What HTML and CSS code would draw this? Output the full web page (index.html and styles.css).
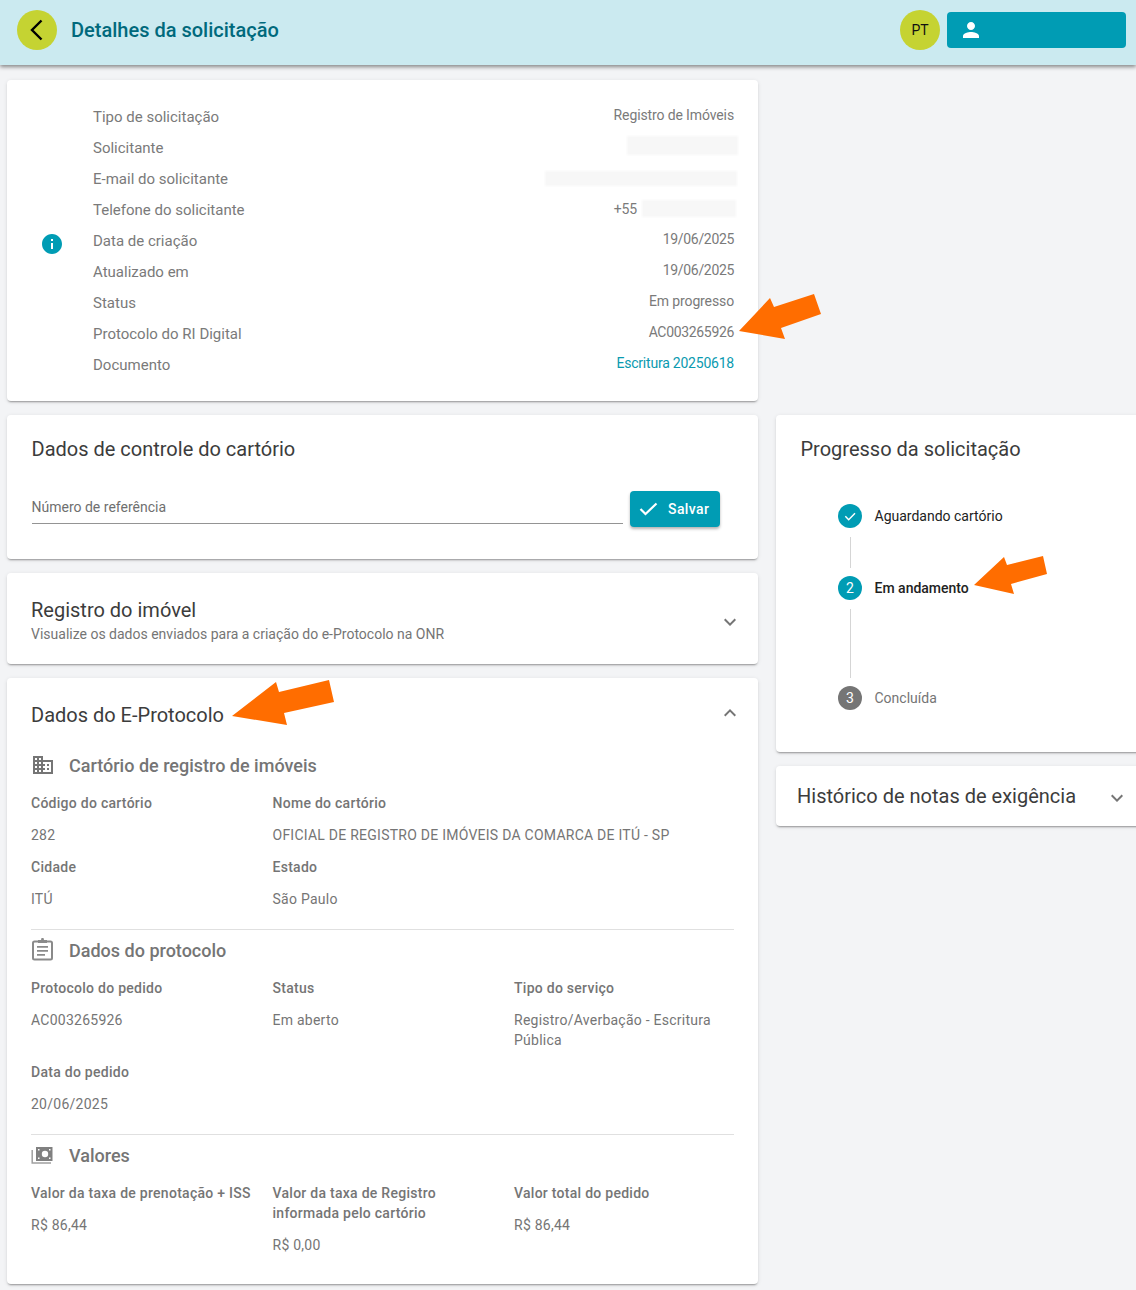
FILE: index.html
```html
<!DOCTYPE html>
<html lang="pt-BR">
<head>
<meta charset="utf-8">
<title>Detalhes da solicitação</title>
<link rel="stylesheet" href="styles.css">
</head>
<body>
<header class="topbar">
  <button class="back" aria-label="Voltar"><svg width="24" height="24" viewBox="0 0 24 24"><path d="M16.500 2.500 7 12l9.500 9.500" fill="none" stroke="#000" stroke-width="2.400"/></svg></button>
  <h1 class="page-title">Detalhes da solicitação</h1>
  <div class="avatar">PT</div>
  <div class="user-btn"><svg width="24" height="24" viewBox="0 0 24 24"><path fill="#fff" d="M12 12c2.200 0 4-1.800 4-4s-1.800-4-4-4-4 1.800-4 4 1.800 4 4 4zm0 2c-2.700 0-8 1.300-8 4v2h16v-2c0-2.700-5.300-4-8-4z"/></svg></div>
</header>
<main class="page">
  <section class="card info-card">
    <svg class="info-icon" width="24" height="24" viewBox="0 0 24 24"><path fill="#009cb4" d="M12 2C6.480 2 2 6.480 2 12s4.480 10 10 10 10-4.480 10-10S17.520 2 12 2zm1 15h-2v-6h2v6zm0-8h-2V7h2v2z"/></svg>
    <div class="info-rows">
      <div class="info-row"><span>Tipo de solicitação</span><span class="val">Registro de Imóveis</span></div>
      <div class="info-row"><span>Solicitante</span><span class="blur blur-a"></span></div>
      <div class="info-row"><span>E-mail do solicitante</span><span class="blur blur-b"></span></div>
      <div class="info-row"><span>Telefone do solicitante</span><span class="val phone">+55<span class="blur blur-c"></span></span></div>
      <div class="info-row"><span>Data de criação</span><span class="val num">19/06/2025</span></div>
      <div class="info-row"><span>Atualizado em</span><span class="val num">19/06/2025</span></div>
      <div class="info-row"><span>Status</span><span class="val">Em progresso</span></div>
      <div class="info-row"><span>Protocolo do RI Digital</span><span class="val num">AC003265926</span></div>
      <div class="info-row"><span>Documento</span><span class="val link">Escritura 20250618</span></div>
    </div>
  </section>
  <div class="columns">
    <div class="col-left">
      <section class="card control-card">
        <h2 class="card-title">Dados de controle do cartório</h2>
        <div class="control-form">
          <div class="field">Número de referência</div>
          <div class="save"><svg width="24" height="24" viewBox="0 0 24 24"><path d="M2.500 12 7.500 17 18.500 6.500" fill="none" stroke="#fff" stroke-width="2.200"/></svg><span>Salvar</span></div>
        </div>
      </section>
      <section class="card reg-card">
        <div>
          <h2 class="card-title">Registro do imóvel</h2>
          <p class="subtitle">Visualize os dados enviados para a criação do e-Protocolo na ONR</p>
        </div>
        <svg class="chev" width="24" height="24" viewBox="0 0 24 24"><path d="M7.400 8.600 12 13.200l4.600-4.600L18 10l-6 6-6-6z" fill="#757575"/></svg>
      </section>
      <section class="card proto-card">
        <div class="proto-head">
          <h2 class="card-title">Dados do E-Protocolo</h2>
          <svg class="chev" width="24" height="24" viewBox="0 0 24 24"><path d="M7.400 15.400 12 10.800l4.600 4.600L18 14l-6-6-6 6z" fill="#757575"/></svg>
        </div>
        <div class="sec-head">
          <svg width="24" height="24" viewBox="0 0 24 24"><path fill="#757575" d="M12 7V3H2v18h20V7H12zM6 19H4v-2h2v2zm0-4H4v-2h2v2zm0-4H4V9h2v2zm0-4H4V5h2v2zm4 12H8v-2h2v2zm0-4H8v-2h2v2zm0-4H8V9h2v2zm0-4H8V5h2v2zm10 12h-8v-2h2v-2h-2v-2h2v-2h-2V9h8v10zm-2-8h-2v2h2v-2zm0 4h-2v2h2v-2z"/></svg>
          <h3>Cartório de registro de imóveis</h3>
        </div>
        <div class="fields">
          <div class="cell"><b>Código do cartório</b><p>282</p></div>
          <div class="cell wide"><b>Nome do cartório</b><p>OFICIAL DE REGISTRO DE IMÓVEIS DA COMARCA DE ITÚ - SP</p></div>
          <div class="cell"><b>Cidade</b><p>ITÚ</p></div>
          <div class="cell wide"><b>Estado</b><p>São Paulo</p></div>
        </div>
        <hr class="rule">
        <div class="sec-head">
          <svg width="24" height="24" viewBox="0 0 24 24"><rect x="2" y="3.500" width="19" height="18" rx="1.500" fill="none" stroke="#8a8a8a" stroke-width="2"/><path fill="#8a8a8a" d="M7 2h3l.5-2h2l.5 2h3v3H7zM6 8h11v1.800H6zm0 4h11v1.800H6zm0 4h8v1.800H6z"/></svg>
          <h3>Dados do protocolo</h3>
        </div>
        <div class="fields">
          <div class="cell"><b>Protocolo do pedido</b><p>AC003265926</p></div>
          <div class="cell"><b>Status</b><p>Em aberto</p></div>
          <div class="cell"><b>Tipo do serviço</b><p>Registro/Averbação - Escritura Pública</p></div>
          <div class="cell"><b>Data do pedido</b><p>20/06/2025</p></div>
        </div>
        <hr class="rule">
        <div class="sec-head">
          <svg width="24" height="24" viewBox="0 0 24 24"><path fill="#808080" d="M5 4h16.500v14H5z"/><circle cx="14" cy="11" r="3.200" fill="#fff"/><path fill="#fff" d="M7 6h1.500v1.500H7zm0 8.500h1.500V16H7zM18 6h1.500v1.500H18zm0 8.500h1.500V16H18z"/><path d="M1.200 7v13h18.800" fill="none" stroke="#a0a0a0" stroke-width="1.500"/></svg>
          <h3>Valores</h3>
        </div>
        <div class="fields last">
          <div class="cell"><b>Valor da taxa de prenotação + ISS</b><p>R$ 86,44</p></div>
          <div class="cell"><b>Valor da taxa de Registro informada pelo cartório</b><p>R$ 0,00</p></div>
          <div class="cell"><b>Valor total do pedido</b><p>R$ 86,44</p></div>
        </div>
      </section>
    </div>
    <div class="col-right">
      <section class="card progress-card">
        <h2 class="card-title">Progresso da solicitação</h2>
        <ol class="steps">
          <li class="step done"><span class="dot"><svg width="16" height="16" viewBox="0 0 24 24"><path d="M5 12.500 10 17.500 19.500 8" fill="none" stroke="#fff" stroke-width="2.200"/></svg></span><span>Aguardando cartório</span></li>
          <li class="line short"></li>
          <li class="step active"><span class="dot">2</span><span>Em andamento</span></li>
          <li class="line long"></li>
          <li class="step todo"><span class="dot">3</span><span>Concluída</span></li>
        </ol>
      </section>
      <section class="card history-card">
        <h2 class="card-title hist">Histórico de notas de exigência</h2>
        <svg class="chev" width="24" height="24" viewBox="0 0 24 24"><path d="M7.400 8.600 12 13.200l4.600-4.600L18 10l-6 6-6-6z" fill="#757575"/></svg>
      </section>
    </div>
  </div>
</main>
<svg class="arrows" width="1136" height="1290" viewBox="0 0 1136 1290">
  <polygon fill="#ff6d00" points="739,331 770,298 774,307 814,294 821,314 781,328 785,339"/>
  <polygon fill="#ff6d00" points="974,585 1004,557 1007,565 1043,556 1047,574 1011,584 1014,594"/>
  <polygon fill="#ff6d00" points="232,716 276,682 279,692 329,680 334,702 284,713 287,725"/>
</svg>
</body>
</html>
```

FILE: styles.css
```css
* { box-sizing: border-box; }
html, body { margin: 0; padding: 0; }
body {
  position: relative;
  width: 1136px;
  height: 1290px;
  overflow: hidden;
  background: #f3f4f6;
  font-family: Roboto, "Liberation Sans", sans-serif;
  font-size: 14px;
  color: #757575;
}
.topbar {
  height: 65px;
  padding: 0 10px 5px 17px;
  display: flex;
  align-items: center;
  background: #cbeaf0;
  box-shadow: 0 2px 4px rgba(0,0,0,.45);
}
.back {
  width: 40px;
  height: 40px;
  padding: 0;
  border: 0;
  border-radius: 50%;
  background: #c5d332;
  display: flex;
  align-items: center;
  justify-content: center;
}
.page-title {
  margin: 0 0 0 14px;
  flex: 1;
  font-size: 20px;
  font-weight: 500;
  color: #00697c;
}
.avatar {
  width: 40px;
  height: 40px;
  border-radius: 50%;
  background: #c5d332;
  color: #111;
  display: flex;
  align-items: center;
  justify-content: center;
  font-size: 14px;
}
.user-btn {
  width: 179px;
  height: 36px;
  margin-left: 7px;
  padding-left: 12px;
  border-radius: 4px;
  background: #009cb4;
  display: flex;
  align-items: center;
}
.page { padding: 15px 0 0 7px; }
.card {
  background: #fff;
  border-radius: 4px;
  box-shadow: 0 2px 2px -1px rgba(0,0,0,.35), 0 1px 4px rgba(0,0,0,.1);
}
.info-card {
  width: 751px;
  height: 321px;
  padding: 0 24px 0 33px;
  display: flex;
  align-items: center;
}
.info-icon { margin: 7px 29px 0 0; flex: none; }
.info-rows { flex: 1; }
.info-row {
  height: 31px;
  display: flex;
  align-items: center;
  justify-content: space-between;
  font-size: 15px;
  color: #7a7a7a;
}
.val { font-size: 14px; letter-spacing: -.12px; margin-top: -4px; }
.val.num { letter-spacing: -.33px; }
.link { color: #0a9ab0; letter-spacing: -.22px; }
.phone { display: flex; align-items: center; margin-top: -2px; }
.blur { display: block; background: #f7f7f7; filter: blur(1px); }
.blur-a { width: 111px; height: 19px; margin-right: -4px; margin-top: -4px; }
.blur-b { width: 192px; height: 15px; margin-right: -3px; margin-top: -1px; }
.blur-c { width: 94px; height: 17px; margin-left: 5px; margin-right: -2px; }
.columns { margin-top: 14px; display: flex; gap: 18px; align-items: flex-start; }
.col-left { width: 751px; flex: none; display: flex; flex-direction: column; gap: 14px; }
.col-right { width: 370px; flex: none; display: flex; flex-direction: column; gap: 14px; }
.card-title {
  margin: 0;
  font-size: 20px;
  line-height: 24px;
  font-weight: 400;
  color: #3c3c3c;
}
.control-card { height: 144px; padding: 22px 38px 0 24.5px; }
.control-form { margin-top: 30px; display: flex; gap: 7px; align-items: flex-start; }
.field {
  flex: 1;
  height: 33px;
  padding-top: 6px;
  border-bottom: 1px solid #949494;
  line-height: 20px;
  color: #6f6f6f;
}
.save {
  width: 90px;
  height: 36px;
  padding-left: 8px;
  display: flex;
  align-items: center;
  gap: 6px;
  border-radius: 4px;
  background: #009cb4;
  color: #fff;
  font-weight: 500;
  letter-spacing: .4px;
  box-shadow: 0 2px 3px rgba(0,0,0,.3);
}
.reg-card {
  height: 91px;
  padding: 25px 16px 0 24px;
  display: flex;
  justify-content: space-between;
  align-items: flex-start;
}
.reg-card .chev { margin-top: 12px; }
.subtitle { margin: 2px 0 0; line-height: 20px; }
.proto-card { height: 606px; padding: 25px 24px 0 24px; }
.proto-head { display: flex; justify-content: space-between; align-items: flex-start; margin-right: -8px; height: 24px; }
.proto-head .chev { margin-top: -2px; }
.sec-head { display: flex; align-items: flex-start; gap: 14px; height: 24px; }
.sec-head svg { margin-top: -1px; flex: none; }
.proto-head + .sec-head { margin-top: 27px; }
.sec-head h3 { margin: 0; font-size: 18px; line-height: 24px; font-weight: 500; color: #757575; }
.fields {
  margin: 15px -21.5px 0 0;
  display: grid;
  grid-template-columns: repeat(3, 1fr);
  letter-spacing: .25px;
}
.cell { padding-right: 20px; }
.cell.wide { grid-column: span 2; }
.cell b { display: block; font-weight: 500; line-height: 20px; letter-spacing: .27px; }
.cell p { margin: 12px 0; line-height: 20px; }
.rule { margin: 8px 0 9px; border: 0; border-top: 1px solid #e0e0e0; }
.progress-card { height: 337px; padding: 22px 0 0 24.5px; }
.steps { list-style: none; margin: 43px 0 0; padding: 0 0 0 37.5px; }
.step { display: flex; align-items: center; gap: 12.5px; height: 24px; }
.dot {
  width: 24px;
  height: 24px;
  border-radius: 50%;
  background: #009cb4;
  color: #fff;
  font-size: 14px;
  display: flex;
  align-items: center;
  justify-content: center;
}
.done, .active { color: #222; }
.active { font-weight: 500; }
.active .dot { font-weight: 400; }
.todo .dot { background: #757575; }
.line { width: 1px; margin: 9px 0 8px 12px; background: #d5d5d5; }
.line.short { height: 31px; }
.line.long { height: 69px; }
.history-card {
  height: 60px;
  padding: 0 0 0 21px;
  display: flex;
  align-items: center;
}
.hist { width: 308px; flex: none; }
.history-card .chev { flex: none; margin-top: 4px; }
.arrows { position: absolute; left: 0; top: 0; pointer-events: none; }
```
